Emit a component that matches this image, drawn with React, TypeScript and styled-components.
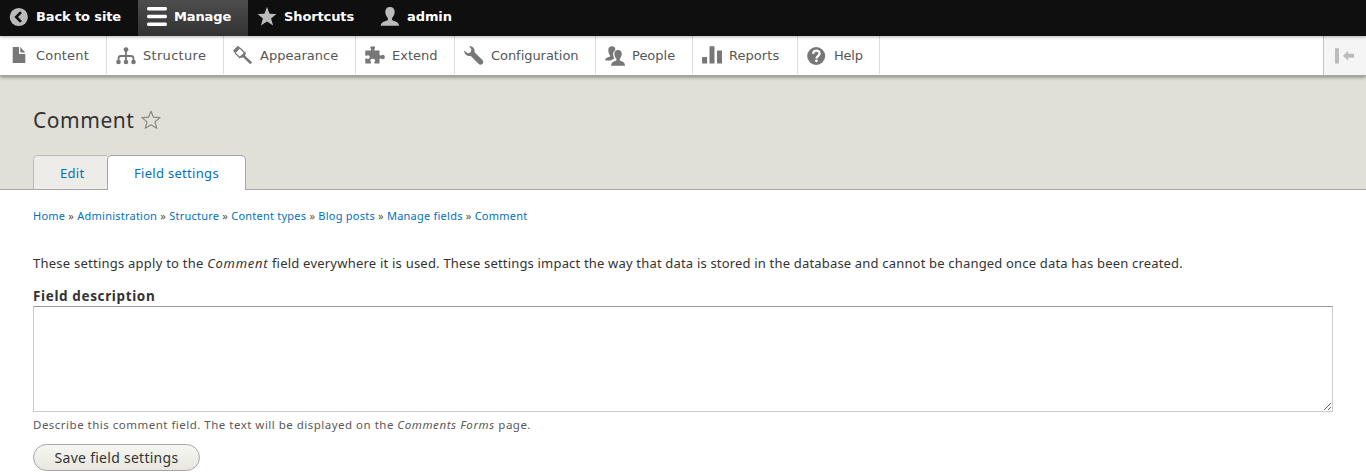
import React from "react";
import styled, { createGlobalStyle } from "styled-components";

const Global = createGlobalStyle`
  * { box-sizing: border-box; }
  body { margin: 0; background: #fff; color: #333; overflow: hidden;
    font-family: "Noto Sans", "Lucida Grande", sans-serif; font-size: 13px; }
`;
const Bar = styled.nav`
  height: 36px; display: flex; background: #0f0f0f; position: relative; z-index: 2;
  box-shadow: 0 1px 3px rgba(0,0,0,.3);
`;
const BarItem = styled.a<{ $w: number; $active?: boolean }>`
  display: flex; align-items: flex-start; width: ${p => p.$w}px; height: 36px; padding: 7px 0 0 9px;
  color: #fff; font: bold 13px/19px "DejaVu Sans", Verdana, sans-serif; white-space: nowrap;
  background: ${p => p.$active ? "linear-gradient(#4d4d4d, #323232)" : "transparent"};
`;
const Tray = styled.nav`
  height: 40px; display: flex; background: #fff; border-bottom: 1px solid #a6a6a0;
  box-shadow: 0 1px 4px rgba(0,0,0,.45); position: relative; z-index: 1;
`;
const TrayItem = styled.a<{ $w: number }>`
  display: flex; align-items: flex-start; width: ${p => p.$w}px; height: 38px; padding: 10px 0 0 9px;
  border-right: 1px solid #ddd; color: #565656; font: 13px/19px "DejaVu Sans", Verdana, sans-serif; white-space: nowrap;
`;
const Glyph = styled.svg<{ $c: string }>`
  width: 20px; height: 20px; flex: none; margin-right: 7px; overflow: visible; fill: ${p => p.$c}; color: ${p => p.$c};
`;
const Label = styled.span<{ $ls?: number }>`letter-spacing: ${p => p.$ls ?? 0}px;`;
const Term = styled.em<{ $ls: number }>`letter-spacing: ${p => p.$ls}px;`;
const Toggle = styled.button`
  margin-left: auto; width: 43px; height: 39px; padding: 10px 0 0 11px; display: flex;
  border: 0; border-left: 1px solid #c4c4c4; background: #f5f5f5;
`;
const Header = styled.header`
  height: 114px; padding: 30px 33px 0; background: #e0dfd8; border-bottom: 1px solid #a6a6a6;
  display: flex; flex-direction: column; justify-content: space-between;
`;
const TitleRow = styled.div`display: flex; align-items: center; gap: 6px; height: 28px;`;
const Title = styled.h1`margin: 0; font-size: 21px; line-height: 28px; font-weight: 400; letter-spacing: .55px;`;
const Star = styled.svg`width: 20px; height: 20px; fill: none; stroke: #8b897c; margin-top: -1px;`;
const Tabs = styled.div`display: flex; height: 35px; margin-bottom: -1px;`;
const Tab = styled.a<{ $w: number; $active?: boolean }>`
  width: ${p => p.$w}px; height: ${p => p.$active ? 35 : 34}px; padding-left: 26px; line-height: 35px; color: #0071bf;
  border: 1px solid ${p => p.$active ? "#a6a6a6" : "#bdbdb8"}; border-bottom: 0;
  border-right-width: ${p => p.$active ? 1 : 0}px;
  border-radius: ${p => p.$active ? "5px 5px 0 0" : "5px 0 0 0"};
  background: ${p => p.$active ? "#fff" : "#edece8"};
`;
const Content = styled.main`padding: 17px 33px 0; display: flex; flex-direction: column; align-items: flex-start;`;
const Crumbs = styled.div`height: 18px; font-size: 11px; line-height: 18px; letter-spacing: .235px; color: #6b5238; white-space: nowrap;`;
const Crumb = styled.a`color: #0071bf;`;
const Intro = styled.p`margin: 28px 0 0; line-height: 20px; white-space: nowrap;`;
const FieldLabel = styled.label`
  margin-top: 14px; height: 19px; font-size: 13.5px; line-height: 18px; font-weight: 700; letter-spacing: .63px; white-space: nowrap;
`;
const Area = styled.textarea`
  display: block; width: 1300px; height: 106px; margin: 0; border: 1px solid #ccc; border-top-color: #999;
  background: #fff; resize: vertical; outline: 0;
`;
const Help = styled.p`
  margin: 4px 0 0; height: 18px; font-size: 11.5px; line-height: 18px; letter-spacing: .49px; color: #595959; white-space: nowrap;
`;
const Save = styled.button`
  margin-top: 10px; width: 167px; height: 27px; padding: 0; border: 1px solid #a6a6a6; border-radius: 14px;
  background: linear-gradient(#f6f6f3, #e7e7df); color: #333; font: 14px/24px "Noto Sans", sans-serif; letter-spacing: .27px;
`;

const icons: Record<string, React.ReactNode> = {
  back: <><circle cx="9.8" cy="10" r="9.1" /><path d="M12 5.2 7.2 10l4.8 4.8" fill="none" stroke="#0f0f0f" strokeWidth="2.6" /></>,
  menu: <path d="M1.2 0h17.6q1.2 0 1.2 1.8t-1.2 1.8H1.2Q0 3.6 0 1.8T1.2 0M1.2 7.7h17.6q1.2 0 1.2 1.8t-1.2 1.8H1.2Q0 11.3 0 9.5t1.2-1.8M1.2 15.4h17.6q1.2 0 1.2 1.8T18.800 19H1.200Q0 19 0 17.200t1.200-1.800" />,
  star: <path d="m10 0 2.600 6.800 6.800.2-5.300 4.500 2 7L10 14.600l-6.100 3.900 2-7L.600 7l6.800-.2z" />,
  user: <path d="M10 0c3.200 0 4.800 2.100 4.700 5.100-.1 2.600-1.100 4-2.400 5.700-.9 1.300-.4 2.500 1.100 3 3.500 1.100 5.400 1.900 5.700 4.900H.700c.3-3 2.300-3.800 5.800-4.900 1.500-.5 2-1.700 1.100-3C6.300 9.100 5.400 7.700 5.300 5.100 5.200 2.100 6.800 0 10 0z" />,
  file: <path d="M3.700 1H10v7h6.300v9H3.700zM11.300 1l4.900 5.500h-4.900z" />,
  tree: <><circle cx="10" cy="3.600" r="2.400" /><circle cx="2.500" cy="16" r="2.300" /><circle cx="10" cy="16" r="2.300" /><circle cx="17.500" cy="16" r="2.300" /><path d="M10 4v11M2.500 15v-2.500q0-2.500 2.500-2.500h10q2.500 0 2.500 2.500V15" fill="none" stroke="currentColor" strokeWidth="1.800" /></>,
  brush: <><path d="M4.900-.2 0 4.700l2.300 2.600L7.500 2z" /><path d="m7.200 2.300 4.600 4.700-5.100 4.500L2 6.900" fill="none" stroke="currentColor" strokeWidth="1.300" /><path d="m12.300 6.300.7 1.300-1.200 1.900 7.200 6.800-1.700 1.900-7.300-7-1.900.9-1.700-.1z" /></>,
  puzzle: <path d="M.3 4.500h5.500q.8-.8-.2-2.100C4.800 1.100 5.600.200 7.700.200s2.900.900 2.100 2.200q-1 1.300-.2 2.100h4.900v4.600q.9.900 2 .1c1.700-1.200 3.300-.2 3.300 1.800s-1.600 2.900-3.300 1.800q-1.100-.7-2 .2v4.400H9.600q-.8-.7.300-2.200c.8-1.200-.2-2.500-2.200-2.500s-3 1.300-2.200 2.500q1.100 1.500.3 2.200H.300v-4.600q.7-.8 2-.1c1.200.6 2.300-.1 2.300-1.600S3.500 8.800 2.300 9.500q-1.300.7-2 0z" />,
  wrench: <path d="M5.200.300C8.700-.2 11.300 2.700 10.500 6.200l8 7.800c1.200 1.200 1 2.800-.1 3.900-1.100 1-2.700 1.100-3.900-.1l-8-8C3.400 10.700.200 8.200.200 4.500L3.500 7.300l3.100-.8.800-3.200z" />,
  people: <><path d="M6.900.200c2.300 0 3.500 1.300 3.400 3.700-.1.300-2.300 1.500-2.200 4.300 0 1.900.8 3.200 1.500 4.300-1.900.7-2.900 1.200-3.500 2.100H.100c.2-2.300 1.500-2.800 3.700-3.500 1.600-.5 1.700-1.300.7-2.600-.7-1-1.200-2.300-1.200-4.400C3.300 1.800 4.600.200 6.900.200z" /><path d="M13.100 4c2.400 0 3.700 1.500 3.600 4-.1 2-.7 3.300-1.600 4.500-.9 1.300-.6 2 .8 2.500 2.600.900 3.900 1.500 4.100 4.700H6.100c.2-3.200 1.500-3.800 4.200-4.700 1.400-.5 1.700-1.200.8-2.500C10.200 11.300 9.500 10 9.400 8c-.1-2.500 1.300-4 3.700-4z" /></>,
  chart: <path d="M.100 11.500q0-.5.500-.5h4q.5 0 .5.500V17.500H.100zM7.500.700q0-.5.500-.5h4q.5 0 .5.500V17.500h-5zM15 5q0-.5.500-.5h4q.5 0 .5.500v12.500h-5z" />,
  help: <><circle cx="9.200" cy="10" r="9" /><path d="M6.200 7.800c.1-4.300 6.500-4.200 6.400-.2 0 2.100-3.100 2.500-3.100 5" fill="none" stroke="#fff" strokeWidth="2.300" /><circle cx="9.400" cy="14.800" r="1.400" fill="#fff" /></>,
  collapse: <path d="M0 2.200h4v15.200H0zM8 9.800l5.200-5v3H19v4h-5.800v3z" />,
};
const Icon = ({ name, c = "#777" }: { name: string; c?: string }) => <Glyph $c={c} viewBox="0 0 20 20">{icons[name]}</Glyph>;

const top: [string, string, number, number][] = [
  ["back", "Back to site", 138, -0.12], ["menu", "Manage", 110, -0.12], ["star", "Shortcuts", 123, -0.12], ["user", "admin", 110, -0.1],
];
const tray: [string, string, number, number][] = [
  ["file", "Content", 107, 0.18], ["tree", "Structure", 117, 0.3], ["brush", "Appearance", 132, 0.02], ["puzzle", "Extend", 99, 0],
  ["wrench", "Configuration", 141, -0.05], ["people", "People", 97, 0], ["chart", "Reports", 105, 0.05], ["help", "Help", 82, -0.2],
];
const crumbs = ["Home", "Administration", "Structure", "Content types", "Blog posts", "Manage fields", "Comment"];

export default function App() {
  return (
    <>
      <Global />
      <Bar>
        {top.map(([i, t, w, ls]) => (
          <BarItem key={t} $w={w} $active={t === "Manage"}><Icon name={i} c={i === "menu" ? "#fff" : "#bbb"} /><Label $ls={ls}>{t}</Label></BarItem>
        ))}
      </Bar>
      <Tray>
        {tray.map(([i, t, w, ls]) => (
          <TrayItem key={t} $w={w}><Icon name={i} /><Label $ls={ls}>{t}</Label></TrayItem>
        ))}
        <Toggle aria-label="Collapse tray"><Icon name="collapse" c="#bbb" /></Toggle>
      </Tray>
      <Header>
        <TitleRow>
          <Title>Comment</Title>
          <Star viewBox="0 0 20 20"><path d="m10 1.200 2.500 6 6.500.4-5 4.300 1.800 6.400-5.800-3.500-5.800 3.500L6 11.900 1 7.600l6.500-.4z" strokeWidth="1.200" strokeLinejoin="round" /></Star>
        </TitleRow>
        <Tabs><Tab $w={74}><Label $ls={0.3}>Edit</Label></Tab><Tab $w={139} $active><Label $ls={0.3}>Field settings</Label></Tab></Tabs>
      </Header>
      <Content>
        <Crumbs>
          {crumbs.map((c, i) => <React.Fragment key={c}>{i > 0 && " » "}<Crumb>{c}</Crumb></React.Fragment>)}
        </Crumbs>
        <Intro>
          <Label $ls={0.24}>These settings apply to the </Label><Term $ls={0.72}>Comment</Term>
          <Label $ls={0.22}> field everywhere it is used. </Label>
          <Label $ls={0.18}>These settings impact the way that data is stored in the database and cannot be changed once data has been created.</Label>
        </Intro>
        <FieldLabel htmlFor="description">Field description</FieldLabel>
        <Area id="description" />
        <Help>Describe this comment field. The text will be displayed on the <Term $ls={0.6}>Comments Forms</Term> page.</Help>
        <Save>Save field settings</Save>
      </Content>
    </>
  );
}
